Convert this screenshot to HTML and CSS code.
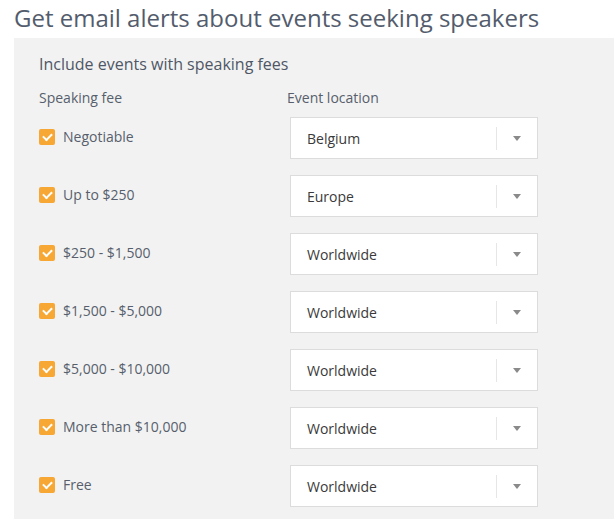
FILE: index.html
```html
<!DOCTYPE html>
<html lang="en">
<head>
  <meta charset="UTF-8">
  <title>Speaker alerts</title>
  <link rel="stylesheet" href="styles.css">
</head>
<body>

  <h1 class="page-title">Get email alerts about events seeking speakers</h1>

  <div class="alerts-panel">
    <h2 class="panel-title">Include events with speaking fees</h2>

    <div class="fee-row fee-head">
      <div class="fee-col">Speaking fee</div>
      <div class="loc-col">Event location</div>
    </div>

    <div class="fee-row">
      <label class="fee-col"><span class="check"></span>Negotiable</label>
      <div class="select"><span class="select-value">Belgium</span><span class="select-arrow"></span></div>
    </div>
    <div class="fee-row">
      <label class="fee-col"><span class="check"></span>Up to $250</label>
      <div class="select"><span class="select-value">Europe</span><span class="select-arrow"></span></div>
    </div>
    <div class="fee-row">
      <label class="fee-col"><span class="check"></span>$250 - $1,500</label>
      <div class="select"><span class="select-value">Worldwide</span><span class="select-arrow"></span></div>
    </div>
    <div class="fee-row">
      <label class="fee-col"><span class="check"></span>$1,500 - $5,000</label>
      <div class="select"><span class="select-value">Worldwide</span><span class="select-arrow"></span></div>
    </div>
    <div class="fee-row">
      <label class="fee-col"><span class="check"></span>$5,000 - $10,000</label>
      <div class="select"><span class="select-value">Worldwide</span><span class="select-arrow"></span></div>
    </div>
    <div class="fee-row">
      <label class="fee-col"><span class="check"></span>More than $10,000</label>
      <div class="select"><span class="select-value">Worldwide</span><span class="select-arrow"></span></div>
    </div>
    <div class="fee-row">
      <label class="fee-col"><span class="check"></span>Free</label>
      <div class="select"><span class="select-value">Worldwide</span><span class="select-arrow"></span></div>
    </div>
  </div>

</body>
</html>
```

FILE: styles.css
```css
* { margin: 0; padding: 0; box-sizing: border-box; }
body {
  font-family: 'Open Sans', 'Liberation Sans', sans-serif;
  background: #fff;
  color: #575f6d;
}

.page-title {
  font-size: 24px;
  font-weight: 400;
  line-height: 36px;
  color: #535c6c;
  padding-left: 14px;
}

.alerts-panel {
  margin: 2px 0 0 14px;
  width: 600px;
  min-height: 481px;
  background: #f2f2f2;
  padding: 15px 0 20px 25px;
}
.panel-title {
  font-size: 16px;
  font-weight: 400;
  line-height: 22px;
  color: #4f5766;
  margin-bottom: 13px;
}

.fee-row {
  display: flex;
  align-items: center;
  margin-bottom: 16px;
  font-size: 14px;
  line-height: 20px;
}
.fee-head { margin-bottom: 9px; }
.fee-col {
  width: 248px;
  display: flex;
  align-items: center;
  margin-top: -2px;
}
.fee-head .fee-col { margin-top: 0; }

/* ticked checkbox */
.check {
  width: 16px;
  height: 16px;
  border-radius: 2px;
  background: #f7a733;
  margin-right: 8px;
  position: relative;
}
.check::after {
  content: '';
  position: absolute;
  left: 4px;
  top: 4px;
  width: 7px;
  height: 4px;
  border-left: 2px solid #fff;
  border-bottom: 2px solid #fff;
  transform: rotate(-45deg);
}

.select {
  margin-left: 3px;
  width: 248px;
  height: 42px;
  background: #fff;
  border: 1px solid #dcdcdc;
  display: flex;
  align-items: center;
  color: #3a3a3a;
}
.select-value {
  flex: 1;
  padding: 2px 0 0 16px;
}
.select-arrow {
  width: 41px;
  height: 23px;
  border-left: 1px solid #e6e6e6;
  position: relative;
}
.select-arrow::after {
  content: '';
  position: absolute;
  left: 16px;
  top: 9px;
  border-left: 4px solid transparent;
  border-right: 4px solid transparent;
  border-top: 5px solid #8a8a8a;
}
```
